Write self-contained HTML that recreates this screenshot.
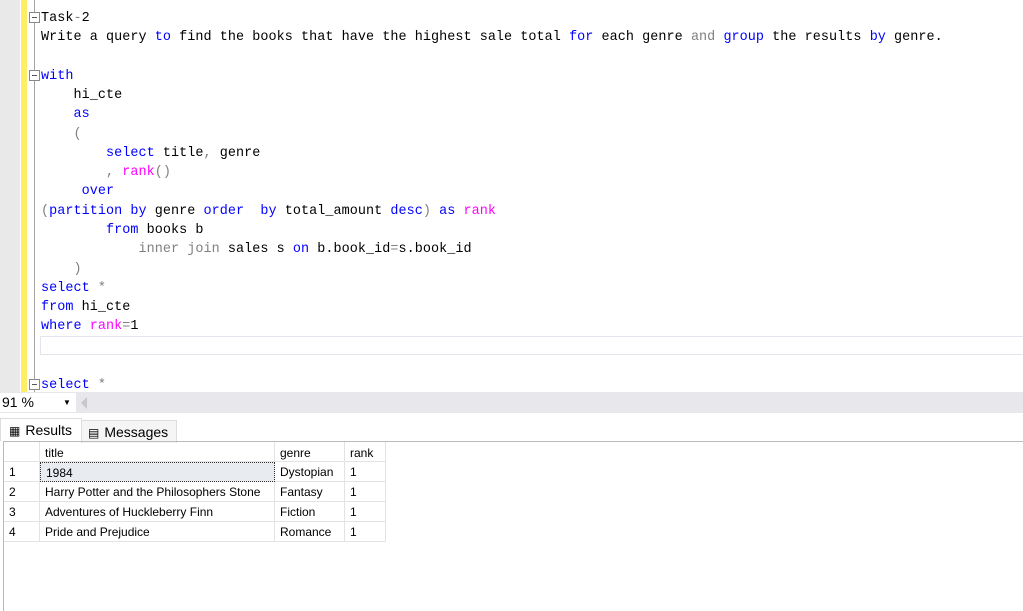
<!DOCTYPE html><html><head><style>
body{margin:0;width:1023px;height:610px;overflow:hidden;background:#fff;position:relative;font-family:"Liberation Sans",sans-serif}
.gut{position:absolute;left:0;top:0;width:20px;height:392px;background:#e9e9e9}
.yel{position:absolute;left:21px;top:0;width:6px;height:392px;background:#ffee62}
.fold{position:absolute;left:34px;top:0;width:1px;height:392px;background:#a5a5a5}
.ln{position:absolute;left:41px;font-family:"Liberation Mono",monospace;font-size:13.45px;letter-spacing:0.06px;white-space:pre;line-height:19px;color:#000}
.k{color:#0000ff}.f{color:#ff00ff}.g{color:#808080}
.box{position:absolute;width:9px;height:9px;border:1px solid #888;background:#fff;left:29px}
.box:after{content:"";position:absolute;left:2px;top:4px;width:5px;height:1px;background:#555}
.cur{position:absolute;left:40px;top:336px;width:983px;height:17px;border:1px solid #e4e4ec;border-right:none}
.zoom{position:absolute;left:0;top:392px;width:1023px;height:21px;background:#e8e8ec}
.zsel{position:absolute;left:0;top:393px;width:76px;height:19px;background:#fff;font-size:14px;line-height:19px;padding-left:2px;box-sizing:border-box}
.tabs{position:absolute;top:413px;left:0;width:1023px;height:28px;background:#fff}
.tab{position:absolute;top:418px;height:22px;font-size:14px;line-height:22px;border:1px solid #ddd;border-bottom:none;background:#f5f5f5}
.grid{position:absolute;left:3px;top:441px;width:1020px;height:169px;border-top:1px solid #bbb;border-left:1px solid #bbb}
.c{position:absolute;font-size:12px;line-height:20px;height:20px;box-sizing:border-box;border-right:1px solid #e3e3e3;border-bottom:1px solid #e3e3e3;padding-left:5px;white-space:nowrap}
</style></head><body>
<div class="gut"></div><div class="yel"></div><div class="fold"></div>
<div class="box" style="top:12px"></div><div class="box" style="top:70px"></div><div class="box" style="top:379px"></div>
<div class="cur"></div>
<div class="ln" style="top:9px">Task<span class="g">-</span>2</div>
<div class="ln" style="top:28px">Write a query <span class="k">to</span> find the books that have the highest sale total <span class="k">for</span> each genre <span class="g">and</span> <span class="k">group</span> the results <span class="k">by</span> genre.</div>
<div class="ln k" style="top:67px">with</div>
<div class="ln" style="top:86px">    hi_cte</div>
<div class="ln k" style="top:105px">    as</div>
<div class="ln g" style="top:125px">    (</div>
<div class="ln" style="top:144px">        <span class="k">select</span> title<span class="g">,</span> genre</div>
<div class="ln" style="top:163px">        <span class="g">,</span> <span class="f">rank</span><span class="g">()</span></div>
<div class="ln k" style="top:182px">     over</div>
<div class="ln" style="top:202px"><span class="g">(</span><span class="k">partition by</span> genre <span class="k">order  by</span> total_amount <span class="k">desc</span><span class="g">)</span> <span class="k">as</span> <span class="f">rank</span></div>
<div class="ln" style="top:221px">        <span class="k">from</span> books b</div>
<div class="ln" style="top:240px">            <span class="g">inner join</span> sales s <span class="k">on</span> b.book_id<span class="g">=</span>s.book_id</div>
<div class="ln g" style="top:260px">    )</div>
<div class="ln" style="top:279px"><span class="k">select</span> <span class="g">*</span></div>
<div class="ln" style="top:298px"><span class="k">from</span> hi_cte</div>
<div class="ln" style="top:317px"><span class="k">where</span> <span class="f">rank</span><span class="g">=</span>1</div>
<div class="ln" style="top:376px"><span class="k">select</span> <span class="g">*</span></div>
<div class="zoom"></div>
<div class="zsel">91 %<span style="position:absolute;left:63px;top:0;font-size:8px">▼</span></div>
<div style="position:absolute;left:81px;top:397px;width:0;height:0;border-top:6px solid transparent;border-bottom:6px solid transparent;border-right:6px solid #c8c8c8"></div>
<div class="tabs"></div>
<div class="tab" style="left:0;width:80px;background:#fff;border-color:#ddd"><span style="font-size:12px;margin:0 5px 0 8px">▦</span>Results</div>
<div class="tab" style="left:81px;width:94px;top:420px"><span style="font-size:12px;margin:0 5px 0 6px">▤</span>Messages</div>
<div class="grid">
<div class="c" style="left:0;top:0;width:36px"></div>
<div class="c" style="left:36px;top:0;width:235px;line-height:22px">title</div>
<div class="c" style="left:271px;top:0;width:70px;line-height:22px">genre</div>
<div class="c" style="left:341px;top:0;width:41px;line-height:22px">rank</div>
<div class="c" style="left:0;top:20px;width:36px">1</div><div class="c" style="left:36px;top:20px;width:235px;background:#e8ecf0;border:1px dotted #333">1984</div><div class="c" style="left:271px;top:20px;width:70px">Dystopian</div><div class="c" style="left:341px;top:20px;width:41px">1</div>
<div class="c" style="left:0;top:40px;width:36px">2</div><div class="c" style="left:36px;top:40px;width:235px">Harry Potter and the Philosophers Stone</div><div class="c" style="left:271px;top:40px;width:70px">Fantasy</div><div class="c" style="left:341px;top:40px;width:41px">1</div>
<div class="c" style="left:0;top:60px;width:36px">3</div><div class="c" style="left:36px;top:60px;width:235px">Adventures of Huckleberry Finn</div><div class="c" style="left:271px;top:60px;width:70px">Fiction</div><div class="c" style="left:341px;top:60px;width:41px">1</div>
<div class="c" style="left:0;top:80px;width:36px">4</div><div class="c" style="left:36px;top:80px;width:235px">Pride and Prejudice</div><div class="c" style="left:271px;top:80px;width:70px">Romance</div><div class="c" style="left:341px;top:80px;width:41px">1</div>
</div>
</body></html>
